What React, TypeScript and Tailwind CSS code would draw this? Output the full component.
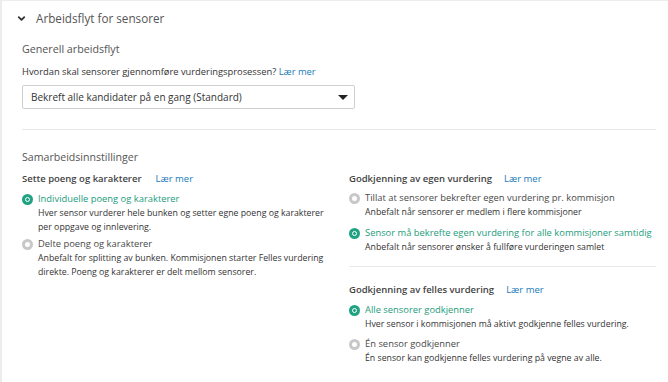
import { ChevronDown } from "lucide-react";

const font = { fontFamily: '"Open Sans", "Noto Sans", sans-serif' };

function Radio({ on }: { on: boolean }) {
  return on ? (
    <span className="mt-[2px] flex h-[11px] w-[11px] shrink-0 items-center justify-center rounded-full bg-[#21a383]">
      <span className="h-[5px] w-[5px] rounded-full border-[1.5px] border-white" />
    </span>
  ) : (
    <span className="mt-[2px] h-[11px] w-[11px] shrink-0 rounded-full border-[3px] border-[#c8c8c8] bg-white" />
  );
}

function Option({ on, title, desc }: { on: boolean; title: string; desc: string }) {
  return (
    <div className="flex gap-[5px]">
      <Radio on={on} />
      <div className="leading-[14px]">
        <div className={`text-[9.4px] ${on ? "text-[#1e9c7c]" : "text-[#4a4a4a]"}`}>{title}</div>
        <div className="text-[8.75px] text-[#333]">{desc}</div>
      </div>
    </div>
  );
}

function GroupTitle({ text, gap }: { text: string; gap: string }) {
  return (
    <div className={`flex items-center text-[9.5px] leading-[14px] ${gap}`}>
      <span className="font-semibold text-[#444]">{text}</span>
      <span className="text-[#1b7bb8]">Lær mer</span>
    </div>
  );
}

export default function App() {
  return (
    <div className="h-[382px] w-[668px] overflow-hidden bg-white" style={font}>
      <div className="h-full border-l-[2px] border-t border-[#ececec]">
        <div className="flex items-center gap-[9px] pl-[14px] pt-[8px]">
          <ChevronDown size={11} strokeWidth={4} className="text-[#333]" />
          <span className="text-[11.7px] leading-[18px] text-[#555]">Arbeidsflyt for sensorer</span>
        </div>

        <div className="pl-[20px] pr-[11px]">
          <div className="mt-[14px] text-[10.7px] leading-[16px] text-[#555]">Generell arbeidsflyt</div>
          <div className="mt-[8px] text-[9.35px] leading-[14px] text-[#333]">
            Hvordan skal sensorer gjennomføre vurderingsprosessen? <span className="text-[#1b7bb8]">Lær mer</span>
          </div>
          <div className="mt-[6px] flex h-[24px] w-[333px] items-center justify-between rounded-[2px] border border-[#cfcfcf] pl-[8px] pr-[6px] text-[10px] text-[#333]">
            <span>Bekreft alle kandidater på en gang (Standard)</span>
            <span className="h-0 w-0 border-x-[5px] border-t-[5px] border-x-transparent border-t-[#222]" />
          </div>
          <div className="mt-[20px] h-px w-[634px] bg-[#e8e8e8]" />

          <div className="mt-[19px] text-[10.6px] leading-[16px] text-[#555]">Samarbeidsinnstillinger</div>

          <div className="mt-[7px] flex">
            <div className="w-[327px] shrink-0">
              <GroupTitle text="Sette poeng og karakterer" gap="gap-[14px]" />
              <div className="mt-[6px] flex w-[308px] flex-col gap-[3px]">
                <Option on title="Individuelle poeng og karakterer" desc="Hver sensor vurderer hele bunken og setter egne poeng og karakterer per oppgave og innlevering." />
                <Option on={false} title="Delte poeng og karakterer" desc="Anbefalt for splitting av bunken. Kommisjonen starter Felles vurdering direkte. Poeng og karakterer er delt mellom sensorer." />
              </div>
            </div>
            <div className="w-[307px]">
              <GroupTitle text="Godkjenning av egen vurdering" gap="gap-[12px]" />
              <div className="mt-[5px] flex flex-col gap-[7px]">
                <Option on={false} title="Tillat at sensorer bekrefter egen vurdering pr. kommisjon" desc="Anbefalt når sensorer er medlem i flere kommisjoner" />
                <Option on title="Sensor må bekrefte egen vurdering for alle kommisjoner samtidig" desc="Anbefalt når sensorer ønsker å fullføre vurderingen samlet" />
              </div>
              <div className="mt-[12px] h-px w-full bg-[#e8e8e8]" />
              <div className="mt-[16px]">
                <GroupTitle text="Godkjenning av felles vurdering" gap="gap-[12px]" />
              </div>
              <div className="mt-[6px] flex flex-col gap-[6px]">
                <Option on title="Alle sensorer godkjenner" desc="Hver sensor i kommisjonen må aktivt godkjenne felles vurdering." />
                <Option on={false} title="Én sensor godkjenner" desc="Én sensor kan godkjenne felles vurdering på vegne av alle." />
              </div>
            </div>
          </div>
        </div>
      </div>
    </div>
  );
}
